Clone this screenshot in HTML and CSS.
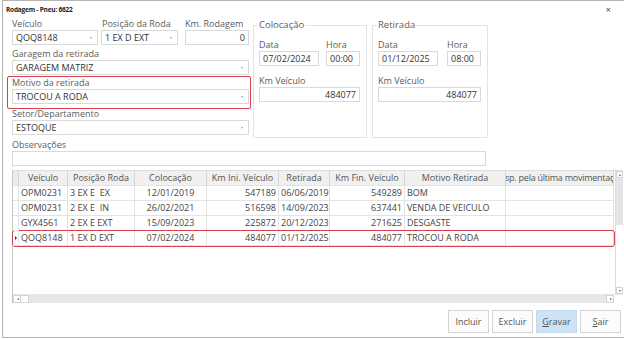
FILE: index.html
```html
<!DOCTYPE html>
<html lang="pt-BR">
  <head>
    <meta charset="UTF-8" />
    <title>Rodagem - Pneu: 6622</title>
    <link rel="stylesheet" href="styles.css">
  </head>
  <body>
    <div class="window">
      <!-- Barra de título -->
      <div class="titlebar">
        <span class="title">Rodagem - Pneu: 6622</span>
        <span class="close">×</span>
      </div>

      <div class="top">
        <div class="left-col">
          <div class="row3">
            <div class="field f-veiculo">
              <label>Veículo</label>
              <div class="input combo">QOQ8148</div>
            </div>
            <div class="field f-posicao">
              <label>Posição da Roda</label>
              <div class="input combo">1 EX D EXT</div>
            </div>
            <div class="field f-km">
              <label>Km. Rodagem</label>
              <div class="input num">0</div>
            </div>
          </div>
          <div class="field">
            <label>Garagem da retirada</label>
            <div class="input combo">GARAGEM MATRIZ</div>
          </div>
          <div class="field highlight">
            <label>Motivo da retirada</label>
            <div class="input combo">TROCOU A RODA</div>
          </div>
          <div class="field f-setor">
            <label>Setor/Departamento</label>
            <div class="input combo">ESTOQUE</div>
          </div>
        </div>

        <fieldset class="group g-colocacao">
          <legend>Colocação</legend>
          <div class="group-row">
            <div class="field f-data">
              <label>Data</label>
              <div class="input">07/02/2024</div>
            </div>
            <div class="field f-hora">
              <label>Hora</label>
              <div class="input">00:00</div>
            </div>
          </div>
          <div class="field f-kmv">
            <label>Km Veículo</label>
            <div class="input num">484077</div>
          </div>
        </fieldset>

        <fieldset class="group g-retirada">
          <legend>Retirada</legend>
          <div class="group-row">
            <div class="field f-data">
              <label>Data</label>
              <div class="input">01/12/2025</div>
            </div>
            <div class="field f-hora">
              <label>Hora</label>
              <div class="input">08:00</div>
            </div>
          </div>
          <div class="field f-kmv">
            <label>Km Veículo</label>
            <div class="input num">484077</div>
          </div>
        </fieldset>
      </div>

      <div class="field f-obs">
        <label>Observações</label>
        <div class="input"></div>
      </div>

      <!-- Grade de movimentações -->
      <div class="grid">
        <div class="grid-main">
          <div class="grid-body">
            <div class="grow head">
              <div class="cell ind"></div>
              <div class="cell c">Veículo</div>
              <div class="cell c">Posição Roda</div>
              <div class="cell c">Colocação</div>
              <div class="cell c">Km Ini. Veículo</div>
              <div class="cell c">Retirada</div>
              <div class="cell c">Km Fin. Veículo</div>
              <div class="cell c">Motivo Retirada</div>
              <div class="cell clip"><span>Resp. pela última movimentação</span></div>
            </div>
            <div class="grow">
              <div class="cell ind"></div>
              <div class="cell">OPM0231</div>
              <div class="cell">3 EX E  EX</div>
              <div class="cell c">12/01/2019</div>
              <div class="cell r">547189</div>
              <div class="cell">06/06/2019</div>
              <div class="cell r">549289</div>
              <div class="cell">BOM</div>
              <div class="cell"></div>
            </div>
            <div class="grow">
              <div class="cell ind"></div>
              <div class="cell">OPM0231</div>
              <div class="cell">2 EX E  IN</div>
              <div class="cell c">26/02/2021</div>
              <div class="cell r">516598</div>
              <div class="cell">14/09/2023</div>
              <div class="cell r">637441</div>
              <div class="cell">VENDA DE VEICULO</div>
              <div class="cell"></div>
            </div>
            <div class="grow">
              <div class="cell ind"></div>
              <div class="cell">GYX4561</div>
              <div class="cell">2 EX E EXT</div>
              <div class="cell c">15/09/2023</div>
              <div class="cell r">225872</div>
              <div class="cell">20/12/2023</div>
              <div class="cell r">271625</div>
              <div class="cell">DESGASTE</div>
              <div class="cell"></div>
            </div>
            <div class="grow current">
              <div class="cell ind"><span class="arrow"></span></div>
              <div class="cell">QOQ8148</div>
              <div class="cell">1 EX D EXT</div>
              <div class="cell c">07/02/2024</div>
              <div class="cell r">484077</div>
              <div class="cell">01/12/2025</div>
              <div class="cell r">484077</div>
              <div class="cell">TROCOU A RODA</div>
              <div class="cell"></div>
            </div>
          </div>
          <div class="vscroll">
            <div class="sb-btn up"></div>
            <div class="sb-thumb"></div>
            <div class="sb-track"></div>
            <div class="sb-btn down"></div>
          </div>
        </div>
        <div class="hscroll">
          <div class="sb-btn left"></div>
          <div class="sb-hthumb"></div>
          <div class="sb-htrack"></div>
          <div class="sb-btn right"></div>
          <div class="sb-corner"></div>
        </div>
      </div>

      <div class="buttons">
        <button class="btn">Incluir</button>
        <button class="btn">Excluir</button>
        <button class="btn primary"><u>G</u>ravar</button>
        <button class="btn"><u>S</u>air</button>
      </div>
    </div>
  </body>
</html>
```

FILE: styles.css
```css
body {
  margin: 0;
  padding: 0;
  background: #ffffff;
  font-family: "Open Sans", "Noto Sans", sans-serif;
  font-size: 9px;
  color: #444;
}

.window {
  margin-left: 2px;
  width: 622px;
  height: 338px;
  box-sizing: border-box;
  border-top: 1px solid #b4b4b4;
  border-left: 1px solid #b4b4b4;
  border-bottom: 1px solid #b4b4b4;
  padding: 0 1px 0 9px;
  overflow: hidden;
}

.titlebar {
  height: 16px;
  display: flex;
  justify-content: space-between;
  align-items: center;
  margin-left: -6px;
  padding-right: 12px;
}

.title {
  font-size: 6.5px;
  font-weight: 700;
  color: #222;
  letter-spacing: -0.2px;
}

.close {
  font-size: 9px;
  color: #444;
}

/* Campos */
.field label {
  display: block;
  height: 12px;
  line-height: 12px;
  color: #5c5c5c;
  white-space: nowrap;
}

.input {
  position: relative;
  height: 15px;
  box-sizing: border-box;
  border: 1px solid #d9d9d9;
  background: #fff;
  line-height: 13px;
  padding: 0 3px;
  color: #333;
  white-space: nowrap;
  overflow: hidden;
}

.input.num {
  text-align: right;
}

.combo::after {
  content: "";
  position: absolute;
  right: 5px;
  top: 6px;
  border-left: 1.5px solid transparent;
  border-right: 1.5px solid transparent;
  border-top: 2px solid #999;
}

.top {
  display: flex;
  align-items: flex-start;
}

.left-col {
  width: 237px;
  padding-top: 1px;
}

.left-col > .field {
  margin-top: 3px;
}

.row3 {
  display: flex;
}

.f-veiculo {
  width: 86px;
  margin-right: 3px;
}

.f-posicao {
  width: 77px;
  margin-right: 7px;
}

.f-km {
  width: 64px;
}

.f-posicao label {
  padding-left: 1px;
}

.left-col > .field.highlight {
  margin: 1px -2px 0 -5px;
  padding: 0 1px 4px 4px;
  border: 1px solid #d7404f;
  border-radius: 2px;
}

.left-col > .field.f-setor {
  margin-top: 0;
}

.f-setor label {
  height: 11px;
  line-height: 10px;
}

/* Grupos */
.group {
  margin: 2px 0 0 4px;
  padding: 0 6px 0 5px;
  border: 1px solid #e4e4e4;
  height: 119px;
  box-sizing: border-box;
  min-width: 0;
}

.g-colocacao {
  width: 114px;
}

.g-retirada {
  width: 116px;
  margin-left: 5px;
}

.group legend {
  padding: 0 1px;
  margin-left: -1px;
  line-height: 12px;
  color: #5c5c5c;
  font-size: 9.5px;
}

.group-row {
  display: flex;
  gap: 7px;
  margin-top: 8px;
}

.f-data {
  width: 60px;
}

.f-hora {
  width: 34px;
}

.g-retirada .group-row {
  gap: 9px;
}

.f-kmv {
  margin-top: 9px;
}

.f-obs {
  width: 474px;
  margin-top: 1px;
}

/* Grade */
.grid {
  margin-top: 4px;
  height: 133px;
  border-left: 1px solid #c6c6c6;
  border-top: 1px solid #dedede;
  box-sizing: border-box;
}

.grid-main {
  display: flex;
  height: 123px;
}

.grid-body {
  width: 601px;
}

.grow {
  display: grid;
  grid-template-columns: 6px 49px 67px 72px 72px 51px 75px 101px 108px;
  height: 15px;
}

.cell {
  box-sizing: border-box;
  border-right: 1px solid #e3e3e3;
  border-bottom: 1px solid #e3e3e3;
  padding: 0 2px;
  line-height: 14px;
  white-space: pre;
  overflow: hidden;
  color: #444;
}

.cell.c {
  text-align: center;
}

.cell.r {
  text-align: right;
}

.head .cell {
  background: #f0f0f0;
  border-right-color: #d4d4d4;
  color: #555;
}

.cell.ind {
  padding: 0;
  position: relative;
}

.head .cell.ind {
  background: #ececec;
}

.cell.clip {
  display: flex;
  justify-content: center;
  padding: 0;
  letter-spacing: -0.25px;
}

.grow.current {
  outline: 1px solid #d7404f;
  outline-offset: 0;
  border-radius: 2px;
}

.arrow {
  position: absolute;
  left: 2px;
  top: 5px;
  border-top: 2px solid transparent;
  border-bottom: 2px solid transparent;
  border-left: 2px solid #333;
}

.vscroll {
  width: 8px;
  display: flex;
  flex-direction: column;
  border-left: 1px solid #dcdcdc;
  margin-left: 1px;
}

.sb-btn {
  position: relative;
  height: 7px;
  width: 7px;
  box-sizing: border-box;
  border: 1px solid #d4d4d4;
  background: #fff;
}

.sb-btn.up::after,
.sb-btn.down::after {
  content: "";
  position: absolute;
  left: 1.5px;
  top: 1.5px;
  border-left: 1.5px solid transparent;
  border-right: 1.5px solid transparent;
}

.sb-btn.up::after {
  border-bottom: 2px solid #666;
}

.sb-btn.down::after {
  border-top: 2px solid #666;
}

.sb-thumb {
  height: 47px;
  background: #e4e4e4;
}

.sb-track {
  flex: 1;
  background: #fff;
}

.hscroll {
  display: flex;
  height: 9px;
  background: #e6e6e6;
  padding-top: 1px;
  box-sizing: border-box;
}

.sb-btn.left,
.sb-btn.right {
  height: 8px;
  width: 8px;
}

.sb-btn.left::after,
.sb-btn.right::after {
  content: "";
  position: absolute;
  top: 2px;
  left: 2.5px;
  border-top: 1.5px solid transparent;
  border-bottom: 1.5px solid transparent;
}

.sb-btn.left::after {
  border-right: 2px solid #666;
}

.sb-btn.right::after {
  border-left: 2px solid #666;
}

.sb-hthumb {
  width: 8px;
  background: #fff;
  border: 1px solid #d4d4d4;
  border-left: 0;
  box-sizing: border-box;
}

.sb-htrack {
  flex: 1;
}

.sb-corner {
  width: 9px;
  background: #fff;
}

/* Botões */
.buttons {
  display: flex;
  justify-content: flex-end;
  gap: 3px;
  margin-top: 7px;
  padding-right: 2px;
}

.btn {
  width: 41px;
  height: 23px;
  box-sizing: border-box;
  border: 1px solid #d4d4d4;
  background: #fcfcfc;
  font-family: "Open Sans", "Noto Sans", sans-serif;
  font-size: 9px;
  color: #555;
  padding: 0;
}

.btn.primary {
  background: #cde3f5;
  border-color: #c2d9ee;
}
```
